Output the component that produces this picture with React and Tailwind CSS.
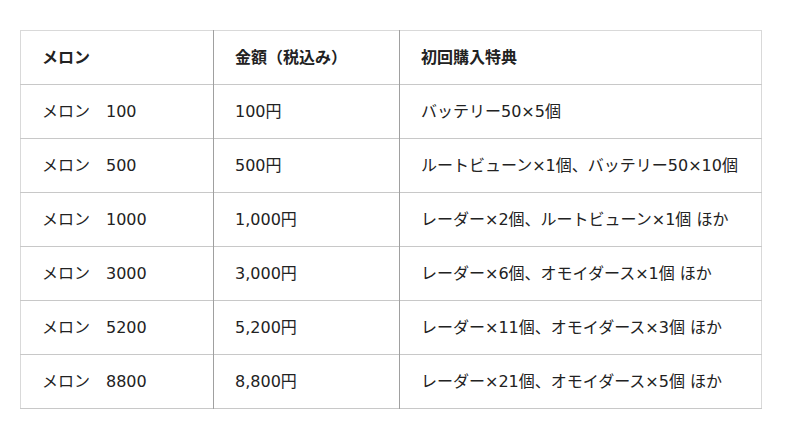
const rows = [
  ['メロン　100', '100円', 'バッテリー50×5個'],
  ['メロン　500', '500円', 'ルートビューン×1個、バッテリー50×10個'],
  ['メロン　1000', '1,000円', 'レーダー×2個、ルートビューン×1個 ほか'],
  ['メロン　3000', '3,000円', 'レーダー×6個、オモイダース×1個 ほか'],
  ['メロン　5200', '5,200円', 'レーダー×11個、オモイダース×3個 ほか'],
  ['メロン　8800', '8,800円', 'レーダー×21個、オモイダース×5個 ほか'],
];

export default function App() {
  return (
    <div className="min-h-screen bg-white pl-[20px] pt-[30px] font-['DejaVu_Sans','Noto_Sans_CJK_JP',sans-serif] text-[16px] text-[#222]">
      <table className="w-[742px] table-fixed border-collapse border border-[#d9d9d9]">
        <colgroup>
          <col className="w-[193px]" />
          <col className="w-[186px]" />
          <col />
        </colgroup>
        <thead>
          <tr className="h-[54px] border-b border-[#c8c8c8]">
            <th className="border-r border-[#a0a0a0] pl-[21px] text-left font-bold">メロン</th>
            <th className="border-r border-[#a0a0a0] pl-[21px] text-left font-bold">金額（税込み）</th>
            <th className="pl-[21px] text-left font-bold">初回購入特典</th>
          </tr>
        </thead>
        <tbody>
          {rows.map((r, i) => (
            <tr key={i} className="h-[54px] border-b border-[#c8c8c8]">
              <td className="border-r border-[#a0a0a0] pl-[21px]">{r[0]}</td>
              <td className="border-r border-[#a0a0a0] pl-[21px]">{r[1]}</td>
              <td className="pl-[21px]">{r[2]}</td>
            </tr>
          ))}
        </tbody>
      </table>
    </div>
  );
}
